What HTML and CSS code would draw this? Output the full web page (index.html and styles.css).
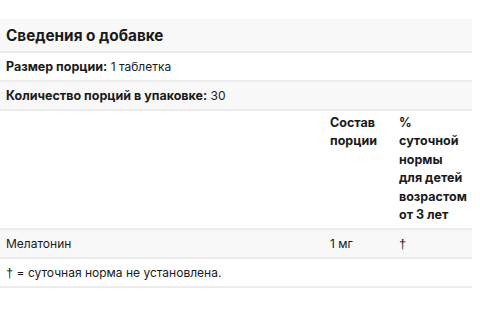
FILE: index.html
```html
<!DOCTYPE html>
<html lang="ru">
<head>
  <meta charset="UTF-8" />
  <meta name="viewport" content="width=device-width, initial-scale=1.0" />
  <title>Сведения о добавке</title>
  <link rel="stylesheet" href="styles.css">
</head>
<body>
  <div class="facts">
    <table class="facts-table">
      <colgroup>
        <col class="col-name" />
        <col class="col-amount" />
        <col class="col-dv" />
      </colgroup>
      <tr class="shaded">
        <th colspan="3" class="title">Сведения о добавке</th>
      </tr>
      <tr>
        <td colspan="3"><b>Размер порции:</b> 1 таблетка</td>
      </tr>
      <tr class="shaded">
        <td colspan="3"><b>Количество порций в упаковке:</b> 30</td>
      </tr>
      <tr class="head">
        <td></td>
        <th>Состав<br>порции</th>
        <th class="dv">%<br>суточной<br>нормы<br>для детей<br>возрастом<br>от 3 лет</th>
      </tr>
      <tr class="shaded">
        <td>Мелатонин</td>
        <td>1 мг</td>
        <td class="dv"><span class="dagger">†</span></td>
      </tr>
      <tr>
        <td colspan="3"><span class="dagger">†</span> = суточная норма не установлена.</td>
      </tr>
    </table>
  </div>
</body>
</html>
```

FILE: styles.css
```css
body {
  margin: 0;
  background: #fff;
  font-family: Inter, "Liberation Sans", Arial, sans-serif;
  color: #1a1a1a;
}
.facts {
  padding-top: 19px;
  width: 472px;
}
.facts-table {
  width: 100%;
  border-collapse: collapse;
  font-size: 12px;
}
.col-name {
  width: 324px;
}
.col-amount {
  width: 69px;
}
.facts-table td, .facts-table th {
  padding: 0 6px;
  height: 27px;
  text-align: left;
  vertical-align: middle;
  border-bottom: 2px solid #ececec;
  color: #1a1a1a;
}
.facts-table b {
  font-weight: 700;
  font-size: 12.5px;
}
.dagger {
  font-family: "Liberation Sans", Arial, sans-serif;
  font-size: 13px;
  color: #222;
}
.facts-table .dv {
  padding-right: 0;
}
.shaded {
  background: #f8f8f8;
}
.facts-table .title {
  height: 32px;
  font-size: 15.3px;
  font-weight: 700;
}
.head th, .head td {
  height: auto;
  padding-top: 3px;
  padding-bottom: 4px;
  vertical-align: top;
  font-size: 12.5px;
  font-weight: 700;
  line-height: 18.4px;
}
```
